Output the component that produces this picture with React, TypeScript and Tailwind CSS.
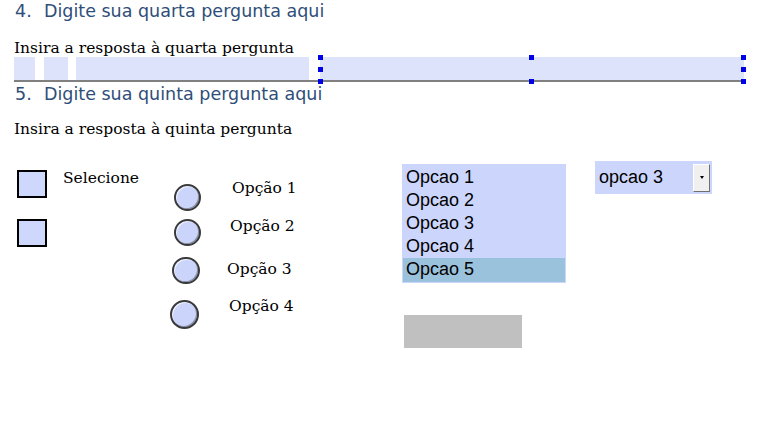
import React from 'react';

const heading = "font-['DejaVu_Sans',sans-serif] text-[17.5px] text-[#2f4e79] leading-none";
const serif = "font-['DejaVu_Serif',serif] text-[15.5px] text-black leading-none";
const arial = "font-['Liberation_Sans',Arial,sans-serif] text-[18px] text-black leading-[23px]";

// Poignée de sélection (petit carré bleu)
function Handle({ x, y }: { x: number; y: number }) {
  return (
    <span
      className="absolute w-[5px] h-[5px] bg-[#0000e6]"
      style={{ left: x, top: y }}
    />
  );
}

function Checkbox({ className = '' }: { className?: string }) {
  return <div className={`w-[30px] h-[28px] border-2 border-black bg-[#cdd8fc] ${className}`} />;
}

function Radio({ className = '' }: { className?: string }) {
  return (
    <div
      className={`w-[27px] h-[27px] rounded-full border-2 border-[#3a3a3a] bg-[#cbd5fb] shadow-[inset_-1px_-1px_0_#8a8fa8,inset_1px_1px_0_#f2f4ff] ${className}`}
    />
  );
}

export default function App() {
  const options = ['Opcao 1', 'Opcao 2', 'Opcao 3', 'Opcao 4', 'Opcao 5'];

  return (
    <div className="relative w-[774px] h-[448px] bg-white overflow-hidden">
      {/* QUESTION 4 */}
      <div className={`flex pl-[15px] pt-[3px] h-[24px] ${heading}`}>
        <span className="w-[29px]">4.</span>
        <span>Digite sua quarta pergunta aqui</span>
      </div>
      <div className={`pl-[14px] pt-[17px] h-[33px] ${serif}`}>Insira a resposta à quarta pergunta</div>

      {/* CHAMP DE RÉPONSE */}
      <div className="relative h-[25px] ml-[14px] w-[730px] border-b-2 border-[#808080] flex">
        <div className="w-[21px] bg-[#dce3fb]" />
        <div className="w-[9px]" />
        <div className="w-[24px] bg-[#dce3fb]" />
        <div className="w-[8px]" />
        <div className="w-[233px] bg-[#dce3fb]" />
        <div className="w-[11px]" />
        <div className="flex-1 bg-[#dce3fb]" />
        <Handle x={304} y={-2} />
        <Handle x={304} y={10} />
        <Handle x={304} y={22} />
        <Handle x={515} y={-2} />
        <Handle x={515} y={22} />
        <Handle x={727} y={-2} />
        <Handle x={727} y={10} />
        <Handle x={727} y={22} />
      </div>

      {/* QUESTION 5 */}
      <div className={`flex pl-[15px] pt-[4px] h-[26px] ${heading}`}>
        <span className="w-[29px]">5.</span>
        <span>Digite sua quinta pergunta aqui</span>
      </div>
      <div className={`pl-[14px] pt-[14px] h-[50px] ${serif}`}>Insira a resposta à quinta pergunta</div>

      {/* CONTRÔLES DE FORMULAIRE */}
      <div className="flex items-start">
        {/* cases à cocher */}
        <div className="flex flex-col gap-[21px] ml-[17px] mt-[12px] w-[30px]">
          <Checkbox />
          <Checkbox />
        </div>
        <div className={`ml-[16px] mt-[13px] w-[107px] ${serif}`}>Selecione</div>

        {/* boutons radio */}
        <div className="flex flex-col w-[232px] mt-[26px]">
          <div className="flex items-start">
            <Radio className="ml-[4px]" />
            <span className={`ml-[31px] -mt-[3px] ${serif}`}>Opção 1</span>
          </div>
          <div className="flex items-start mt-[8px]">
            <Radio className="ml-[4px]" />
            <span className={`ml-[29px] ${serif}`}>Opção 2</span>
          </div>
          <div className="flex items-start mt-[11px]">
            <Radio className="ml-[2px] w-[28px]" />
            <span className={`ml-[27px] mt-[5px] ${serif}`}>Opção 3</span>
          </div>
          <div className="flex items-start mt-[16px]">
            <Radio className="w-[29px] h-[29px]" />
            <span className={`ml-[30px] -mt-[1px] ${serif}`}>Opção 4</span>
          </div>
        </div>

        {/* liste + champ gris */}
        <div className="flex flex-col w-[193px] mt-[6px]">
          <div className="w-[164px] h-[119px] bg-[#ccd6fc] pt-[2px] px-[1px]">
            {options.map((o, i) => (
              <div
                key={o}
                className={`pl-[3px] h-[23px] ${arial} ${i === 4 ? 'bg-[#9bc2dc] h-[24px]' : ''}`}
              >
                {o}
              </div>
            ))}
          </div>
          <div className="w-[118px] h-[33px] bg-[#c0c0c0] ml-[2px] mt-[32px]" />
        </div>

        {/* liste déroulante */}
        <div className="flex items-center w-[117px] h-[33px] bg-[#ccd6fc] mt-[3px] pl-[4px]">
          <span className={`flex-1 ${arial}`}>opcao 3</span>
          <div className="w-[17px] h-[28px] mr-[2px] bg-[#f0f0f0] border border-t-white border-l-white border-r-[#707070] border-b-[#707070] flex items-center justify-center">
            <span className="w-0 h-0 border-l-[2px] border-r-[2px] border-t-[3px] border-l-transparent border-r-transparent border-t-black" />
          </div>
        </div>
      </div>
    </div>
  );
}
